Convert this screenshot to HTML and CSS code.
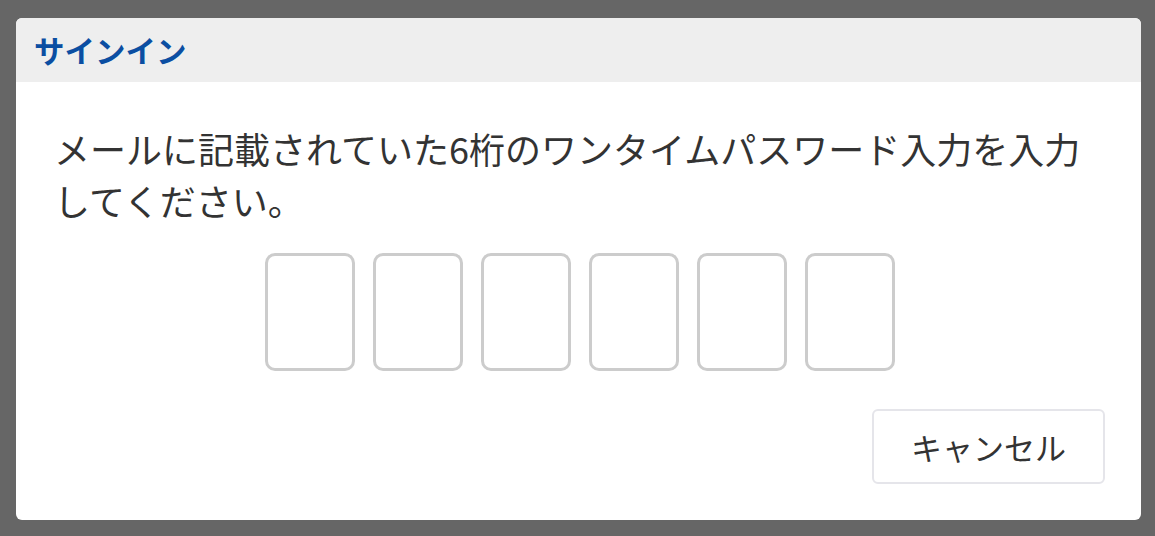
FILE: index.html
```html
<!DOCTYPE html>
<html lang="ja">
<head>
<meta charset="utf-8">
<link rel="stylesheet" href="styles.css">
</head>
<body>
<div class="dialog">
  <div class="dialog-header">
    <h1 class="dialog-title">サインイン</h1>
  </div>
  <div class="dialog-body">
    <p class="message">メールに記載されていた6桁のワンタイムパスワード入力を入力してください。</p>
    <div class="otp">
      <input class="otp-box" type="text" maxlength="1">
      <input class="otp-box" type="text" maxlength="1">
      <input class="otp-box" type="text" maxlength="1">
      <input class="otp-box" type="text" maxlength="1">
      <input class="otp-box" type="text" maxlength="1">
      <input class="otp-box" type="text" maxlength="1">
    </div>
    <div class="actions">
      <button class="cancel-btn" type="button">キャンセル</button>
    </div>
  </div>
</div>
</body>
</html>
```

FILE: styles.css
```css
html, body {
  margin: 0;
  padding: 0;
  height: 100%;
}
body {
  background: #666666;
  font-family: "Noto Sans CJK JP", "Noto Sans", sans-serif;
  color: #333333;
  padding: 18px 14px 16px 16px;
  box-sizing: border-box;
}
.dialog {
  width: 1125px;
  height: 502px;
  background: #ffffff;
  border-radius: 6px;
  overflow: hidden;
  display: flex;
  flex-direction: column;
}
.dialog-header {
  background: #eeeeee;
  height: 64px;
  padding: 0 18px;
  display: flex;
  align-items: center;
  flex-shrink: 0;
}
.dialog-title {
  margin: 0;
  font-size: 30.5px;
  font-weight: 700;
  color: #0b4ea2;
  line-height: 1;
}
.dialog-body {
  padding: 40px 36px 36px 38px;
  display: flex;
  flex-direction: column;
  flex: 1;
}
.message {
  margin: 0;
  font-size: 36px;
  line-height: 52px;
  color: #333333;
}
.otp {
  display: flex;
  justify-content: center;
  gap: 18px;
  margin-top: 27px;
}
.otp-box {
  width: 90px;
  height: 118px;
  box-sizing: border-box;
  border: 3px solid #cccccc;
  border-radius: 10px;
  background: #ffffff;
  padding: 0;
  margin: 0;
  outline: none;
}
.actions {
  display: flex;
  justify-content: flex-end;
  margin-top: auto;
}
.cancel-btn {
  width: 233px;
  height: 75px;
  box-sizing: border-box;
  border: 2px solid #e5e5ea;
  border-radius: 6px;
  background: #ffffff;
  font-family: "Noto Sans CJK JP", "Noto Sans", sans-serif;
  font-size: 31px;
  color: #333333;
  padding: 0;
}
```
